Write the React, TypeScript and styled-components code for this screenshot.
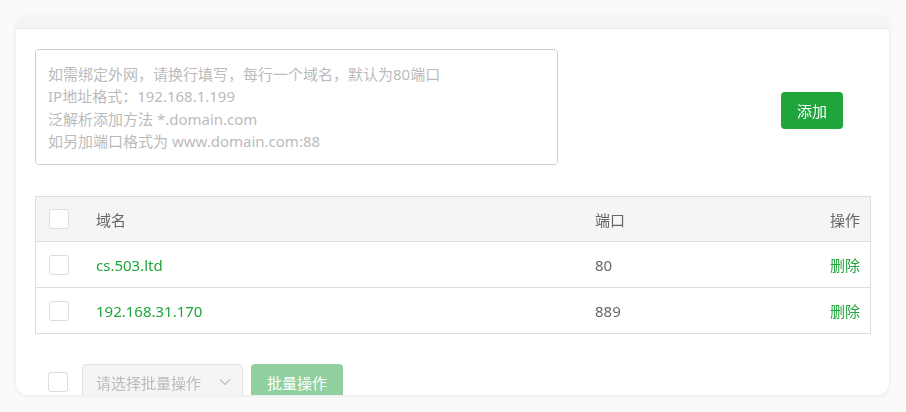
import React from "react";
import styled, { createGlobalStyle } from "styled-components";

interface DomainRow {
  name: string;
  port: number;
}

const rows: DomainRow[] = [
  { name: "cs.503.ltd", port: 80 },
  { name: "192.168.31.170", port: 889 },
];

const placeholder = [
  "如需绑定外网，请换行填写，每行一个域名，默认为80端口",
  "IP地址格式：192.168.1.199",
  "泛解析添加方法 *.domain.com",
  "如另加端口格式为 www.domain.com:88",
].join("\n");

const GlobalStyle = createGlobalStyle`
  html, body {
    margin: 0;
    padding: 0;
    background: #fafafa;
    font-family: "Noto Sans", "Noto Sans CJK SC", sans-serif;
    font-size: 15px;
    color: #666;
  }
`;

const Page = styled.div`
  width: 906px;
  height: 412px;
  padding: 15px 17px 0 16px;
  box-sizing: border-box;
  overflow: hidden;
`;

const Card = styled.div`
  height: 380px;
  background: #fff;
  border-radius: 12px;
  box-shadow: 0 1px 4px rgba(0, 0, 0, 0.08);
  overflow: hidden;
  display: flex;
  flex-direction: column;
`;

const CardTop = styled.div`
  height: 13px;
  flex-shrink: 0;
  background: #f5f5f5;
  border-bottom: 1px solid #ebebeb;
`;

const Body = styled.div`
  padding: 20px 18px 0 19px;
  display: flex;
  flex-direction: column;
`;

const AddRow = styled.div`
  display: flex;
  align-items: center;
  justify-content: space-between;
`;

const DomainInput = styled.textarea`
  width: 523px;
  height: 116px;
  box-sizing: border-box;
  border: 1px solid #ccc;
  border-radius: 4px;
  padding: 13px 12px;
  resize: none;
  font-family: inherit;
  font-size: 15px;
  line-height: 22.4px;
  color: #333;
  outline: none;
  &::placeholder {
    color: #bbb;
  }
`;

const Button = styled.button<{ $disabled?: boolean }>`
  height: 36px;
  padding: 0 16px;
  border: none;
  border-radius: 4px;
  background: ${(p) => (p.$disabled ? "#90d09e" : "#20a53a")};
  color: #fff;
  font-family: inherit;
  font-size: 15px;
  cursor: pointer;
`;

const AddButton = styled(Button)`
  margin: 6px 28px 0 0;
  width: 62px;
  height: 37px;
`;

const Table = styled.table`
  margin-top: 31px;
  width: 100%;
  border-collapse: collapse;
  border: 1px solid #ddd;
`;

const HeadRow = styled.tr`
  background: #f5f5f5;
  height: 45px;
`;

const Row = styled.tr`
  height: 46px;
  border-top: 1px solid #ddd;
`;

const Cell = styled.td<{ $align?: string; $color?: string; $width?: string }>`
  padding: 0 10px;
  text-align: ${(p) => p.$align || "left"};
  color: ${(p) => p.$color || "#666"};
  width: ${(p) => p.$width || "auto"};
  font-weight: normal;
  white-space: nowrap;
`;

const CheckCell = styled.td`
  width: 20px;
  padding: 0 17px 0 13px;
`;

const CheckBox = styled.span`
  display: block;
  width: 20px;
  height: 20px;
  box-sizing: border-box;
  border: 1px solid #ddd;
  border-radius: 3px;
  background: #fff;
`;

const Link = styled.a`
  color: #20a53a;
  text-decoration: none;
  cursor: pointer;
`;

const Footer = styled.div`
  margin-top: 30px;
  padding-left: 13px;
  display: flex;
  align-items: center;
  gap: 8px;
`;

const Select = styled.div`
  margin-left: 6px;
  width: 161px;
  height: 36px;
  box-sizing: border-box;
  border: 1px solid #e2e2e2;
  border-radius: 4px;
  background: #f5f5f5;
  display: flex;
  align-items: center;
  justify-content: space-between;
  padding: 0 10px 0 13px;
  color: #bbb;
`;

const SelectButton = styled(Button)`
  width: 92px;
`;

const Chevron = () => (
  <svg width="14" height="14" viewBox="0 0 14 14" fill="none">
    <path d="M2 4.5 L7 9.5 L12 4.5" stroke="#bbb" strokeWidth="1.2" />
  </svg>
);

export default function App() {
  return (
    <>
      <GlobalStyle />
      <Page>
        <Card>
          <CardTop />
          <Body>
            <AddRow>
              <DomainInput placeholder={placeholder} />
              <AddButton>添加</AddButton>
            </AddRow>
            <Table>
              <tbody>
                <HeadRow>
                  <CheckCell>
                    <CheckBox />
                  </CheckCell>
                  <Cell>域名</Cell>
                  <Cell $width="185px">端口</Cell>
                  <Cell $align="right" $width="60px">
                    操作
                  </Cell>
                </HeadRow>
                {rows.map((r) => (
                  <Row key={r.name}>
                    <CheckCell>
                      <CheckBox />
                    </CheckCell>
                    <Cell $color="#20a53a">{r.name}</Cell>
                    <Cell>{r.port}</Cell>
                    <Cell $align="right">
                      <Link>删除</Link>
                    </Cell>
                  </Row>
                ))}
              </tbody>
            </Table>
            <Footer>
              <CheckBox />
              <Select>
                <span>请选择批量操作</span>
                <Chevron />
              </Select>
              <SelectButton $disabled>批量操作</SelectButton>
            </Footer>
          </Body>
        </Card>
      </Page>
    </>
  );
}
